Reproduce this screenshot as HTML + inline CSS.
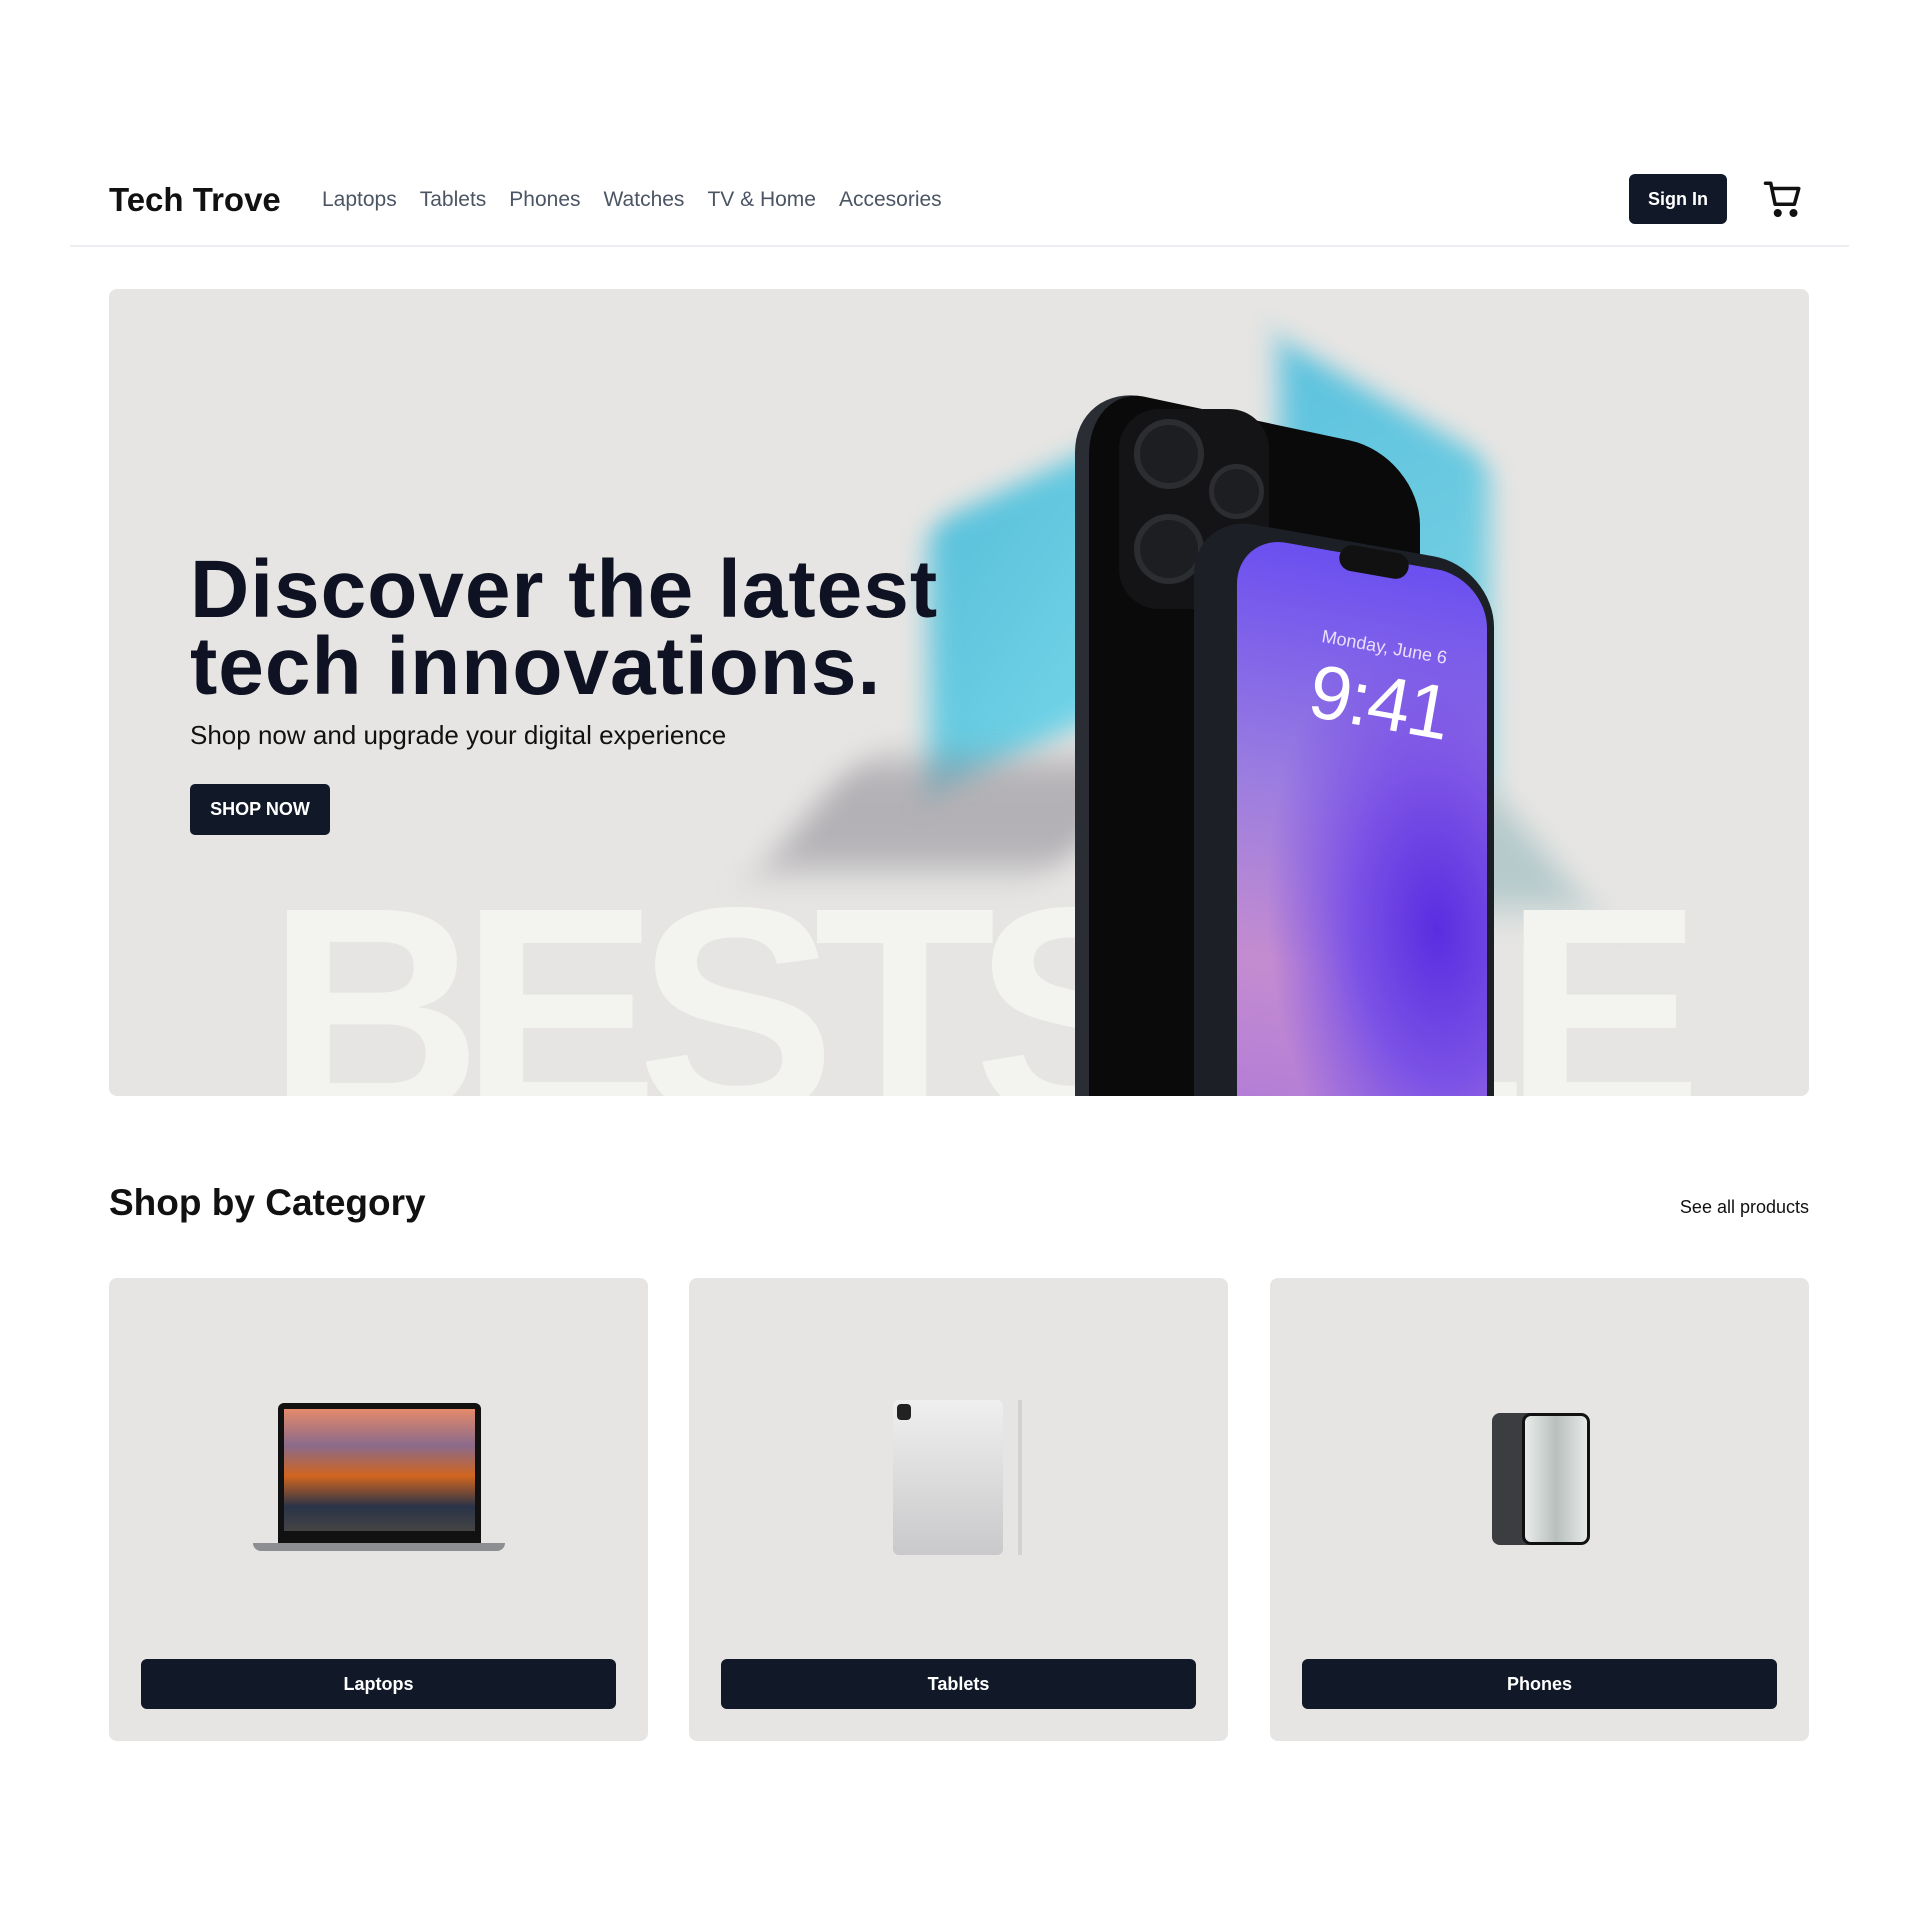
<!DOCTYPE html>
<html><head><meta charset="utf-8"><style>
*{margin:0;padding:0;box-sizing:border-box}
body{width:1920px;height:1920px;background:#fff;font-family:"Liberation Sans",sans-serif;position:relative;overflow:hidden;color:#111827}
.abs{position:absolute}
.logo{left:109px;top:181px;font-size:33px;font-weight:700;letter-spacing:0px;color:#111}
.nav{left:322px;top:188px;font-size:21px;color:#4b5563;display:flex;gap:23px}
.signin{left:1629px;top:174px;width:98px;height:50px;background:#111827;color:#fff;border-radius:6px;font-size:18px;font-weight:700;display:flex;align-items:center;justify-content:center}
.hr{left:70px;top:245px;width:1779px;height:2px;background:#eceef1}
.hero{left:109px;top:289px;width:1700px;height:807px;background:#e6e5e3;border-radius:8px;overflow:hidden}
.card{top:1278px;width:539px;height:463px;background:#e6e5e3;border-radius:8px}
.cbtn{position:absolute;left:32px;right:32px;top:381px;height:50px;background:#111827;color:#fff;border-radius:6px;font-size:18px;font-weight:700;display:flex;align-items:center;justify-content:center}
</style></head><body>
<div class="abs logo">Tech Trove</div>
<div class="abs nav"><span>Laptops</span><span>Tablets</span><span>Phones</span><span>Watches</span><span>TV &amp; Home</span><span>Accesories</span></div>
<div class="abs signin">Sign In</div>
<svg class="abs" style="left:1762px;top:178px" width="42" height="42" viewBox="0 0 24 24" fill="none" stroke="#111" stroke-width="2" stroke-linecap="round" stroke-linejoin="round"><path d="M2 3h3l2.5 12h11l2.5-9H6.5"/><circle cx="9" cy="20" r="1.3" fill="#111"/><circle cx="18" cy="20" r="1.3" fill="#111"/></svg>
<div class="abs hr"></div>

<div class="abs hero">
  <div class="abs" style="left:820px;top:190px;width:200px;height:270px;background:linear-gradient(135deg,#2ab5d8,#4fd0ea);transform:skewY(-25deg);filter:blur(14px);opacity:.75"></div>
  <div class="abs" style="left:700px;top:470px;width:300px;height:110px;background:#8a8790;transform:skewX(-40deg);filter:blur(18px);opacity:.55"></div>
  <div class="abs" style="left:1170px;top:110px;width:210px;height:320px;background:linear-gradient(135deg,#2fb6dc,#5acfe6);transform:skewY(30deg);filter:blur(14px);opacity:.75"></div>
  <div class="abs" style="left:1140px;top:470px;width:280px;height:150px;background:#8fb4b8;transform:skewX(40deg);filter:blur(18px);opacity:.55"></div>
  <div class="abs" style="left:158px;top:575px;font-size:298px;font-weight:900;color:#f3f3f0;letter-spacing:-22px;line-height:1">BESTSALE</div>
  <div class="abs" style="left:966px;top:93px;width:345px;height:760px;background:#0a0a0b;border-radius:70px 70px 0 0;border-left:14px solid #2a2d33;transform:skewY(12deg);transform-origin:left top"></div>
  <div class="abs" style="left:1010px;top:120px;width:150px;height:200px;background:#141416;border-radius:40px"></div>
  <div class="abs" style="left:1025px;top:130px;width:70px;height:70px;border-radius:50%;background:#1d1e22;border:6px solid #2b2d31"></div>
  <div class="abs" style="left:1025px;top:225px;width:70px;height:70px;border-radius:50%;background:#1d1e22;border:6px solid #2b2d31"></div>
  <div class="abs" style="left:1100px;top:175px;width:55px;height:55px;border-radius:50%;background:#1d1e22;border:5px solid #2b2d31"></div>
  <div class="abs" style="left:1085px;top:225px;width:300px;height:620px;background:#1c1f26;border-radius:60px 60px 0 0;transform:skewY(10deg);transform-origin:left top"></div>
  <div class="abs" style="left:1128px;top:245px;width:250px;height:600px;border-radius:50px 50px 0 0;background:radial-gradient(ellipse at 80% 60%,#5a2de0 0%,#7b52e6 30%,transparent 60%),linear-gradient(180deg,#6b4ff0 0%,#9b7de0 40%,#c48cd0 70%,#b07ad8 100%);transform:skewY(10deg);transform-origin:left top"></div>
  <div class="abs" style="left:1230px;top:260px;width:70px;height:26px;background:#111;border-radius:14px;transform:rotate(10deg)"></div>
  <div class="abs" style="left:1212px;top:348px;font-size:18px;color:#e8e0ff;transform:rotate(10deg)">Monday, June 6</div>
  <div class="abs" style="left:1200px;top:370px;font-size:76px;color:#fff;transform:rotate(10deg);letter-spacing:-2px">9:41</div>
  <div class="abs" style="left:81px;top:262px;font-size:82px;font-weight:700;line-height:77px;color:#0f1222;letter-spacing:1px">Discover the latest<br>tech innovations.</div>
  <div class="abs" style="left:81px;top:431px;font-size:26px;color:#111">Shop now and upgrade your digital experience</div>
  <div class="abs" style="left:81px;top:495px;width:140px;height:51px;background:#111827;color:#fff;border-radius:5px;font-size:18px;font-weight:700;display:flex;align-items:center;justify-content:center">SHOP NOW</div>
</div>

<div class="abs" style="left:109px;top:1182px;font-size:37px;font-weight:700;color:#111">Shop by Category</div>
<div class="abs" style="right:111px;top:1197px;font-size:18px;color:#111">See all products</div>

<div class="abs card" style="left:109px"><div class="cbtn">Laptops</div>
  <div class="abs" style="left:169px;top:125px;width:203px;height:140px;background:#111;border-radius:6px 6px 0 0;padding:6px 6px 12px">
    <div style="width:100%;height:100%;background:linear-gradient(180deg,#e58a6a 0%,#8a6a8a 30%,#d0651f 55%,#2a3348 80%,#444 100%)"></div></div>
  <div class="abs" style="left:144px;top:265px;width:252px;height:8px;background:#8d8e92;border-radius:0 0 8px 8px"></div>
</div>
<div class="abs card" style="left:689px"><div class="cbtn">Tablets</div>
  <div class="abs" style="left:204px;top:122px;width:110px;height:155px;background:linear-gradient(180deg,#efefef,#c9c9cb);border-radius:6px"></div>
  <div class="abs" style="left:208px;top:126px;width:14px;height:16px;background:#222;border-radius:4px"></div>
  <div class="abs" style="left:329px;top:122px;width:4px;height:155px;background:#d2d2d2"></div>
</div>
<div class="abs card" style="left:1270px"><div class="cbtn">Phones</div>
  <div class="abs" style="left:222px;top:135px;width:50px;height:132px;background:#3b3d40;border-radius:8px"></div>
  <div class="abs" style="left:252px;top:135px;width:68px;height:132px;background:linear-gradient(90deg,#e9ecea,#b8bfbc,#e6e9e7);border:3px solid #111;border-radius:9px"></div>
</div>
</body></html>
